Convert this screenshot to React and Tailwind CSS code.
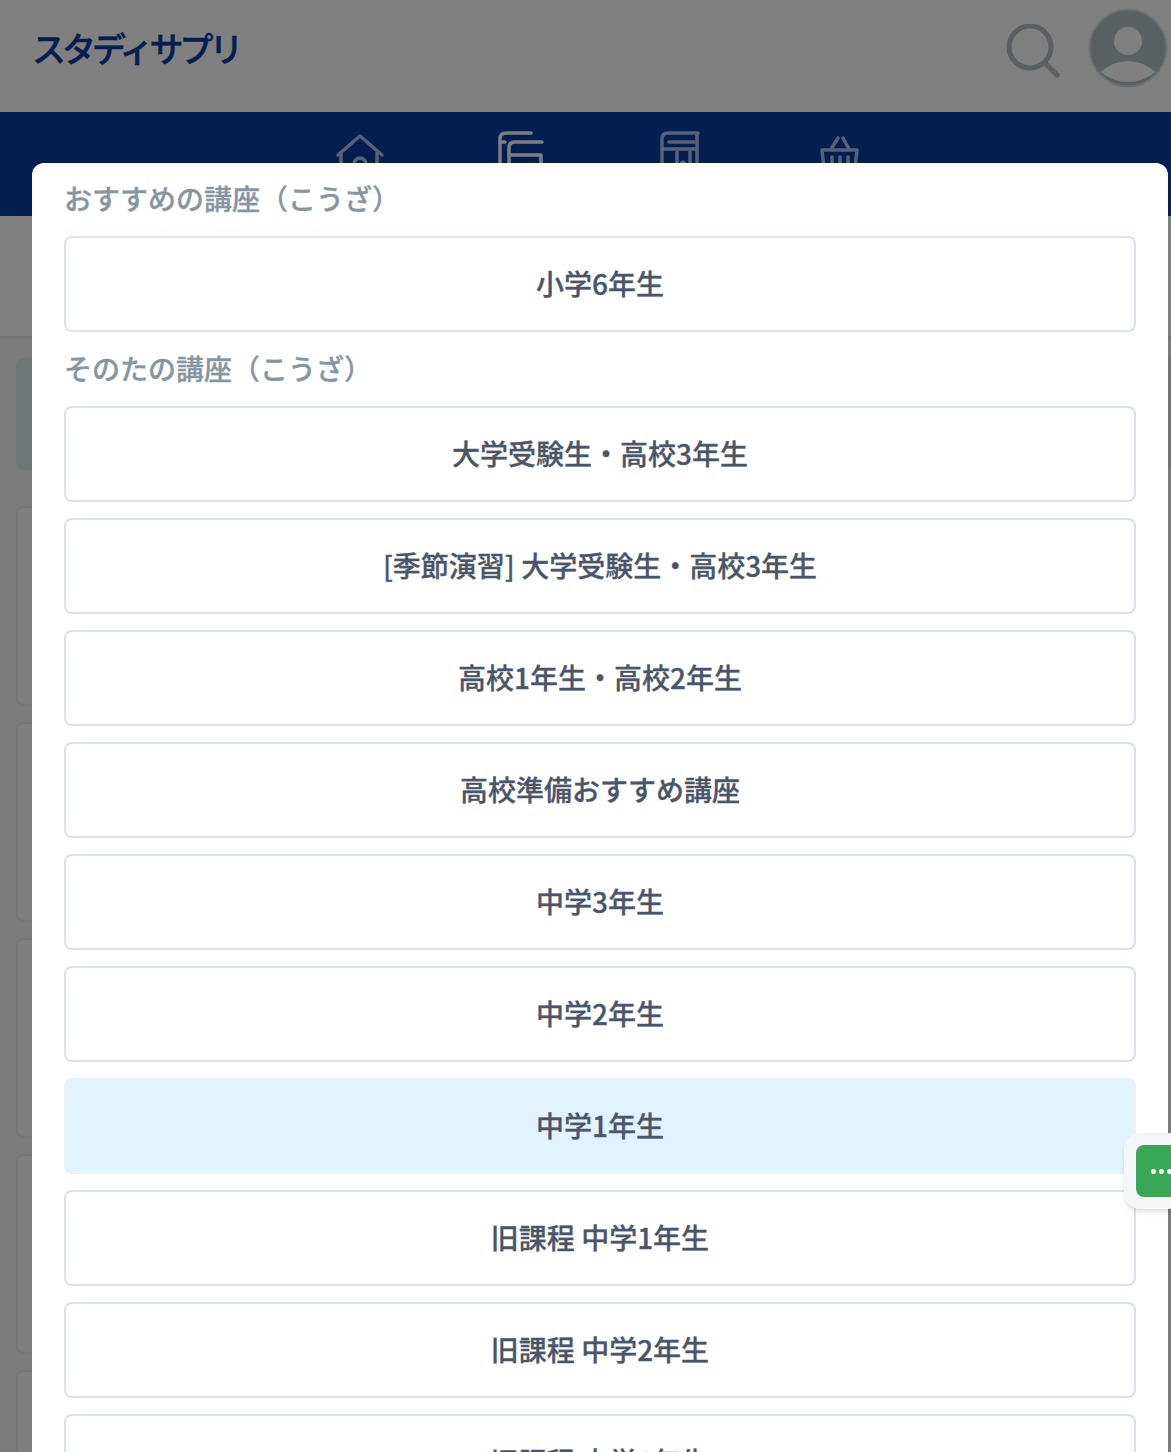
const font = { fontFamily: '"Noto Sans CJK JP", sans-serif' };

const otherCourses = [
    '大学受験生・高校3年生',
    '[季節演習] 大学受験生・高校3年生',
    '高校1年生・高校2年生',
    '高校準備おすすめ講座',
    '中学3年生',
    '中学2年生',
    '中学1年生',
    '旧課程 中学1年生',
    '旧課程 中学2年生',
    '旧課程 中学3年生',
];

const CourseButton = ({ label, active }) => (
    <div
        className={`mb-4 flex h-24 items-center justify-center rounded-lg border-2 pb-[2px] text-[28px] font-medium text-[#4a5568] [-webkit-text-stroke:0.3px] ${
            active ? 'border-[#ebf0f3] bg-[#e1f3ff]' : 'border-[#dae1e7] bg-white'
        }`}
    >
        {label}
    </div>
);

const Heading = ({ children }) => (
    <h2 className="mb-4 h-[42px] text-[28px] leading-[41px] font-medium text-[#8795a1] [-webkit-text-stroke:0.3px]">{children}</h2>
);

const NavIcons = () => (
    <div className="flex justify-center gap-[96px] pt-[18px] pl-[29px]">
        <svg width="64" height="64" viewBox="0 0 64 64" fill="none" stroke="#56617a" strokeWidth="3.5" strokeLinecap="round" strokeLinejoin="round">
            <path d="M10 25 32 6l22 19M13 23v34h36V23" />
            <path d="M26 57V34a6 6 0 0 1 12 0v23" />
        </svg>
        <svg width="64" height="64" viewBox="0 0 64 64" fill="none" stroke="#7c7f86" strokeWidth="3.5" strokeLinecap="round" strokeLinejoin="round">
            <path d="M43 3H18q-6 0-6 6v48M12 12h5" />
            <path d="M54 12H27q-6 0-6 6v39M21 25h32v32" />
        </svg>
        <svg width="64" height="64" viewBox="0 0 64 64" fill="none" stroke="#56617a" strokeWidth="3.5" strokeLinecap="round" strokeLinejoin="round">
            <path d="M50 3H20q-6 0-6 6v48M49 3v54M21 12h28M14 19h35" />
            <path d="M29 22v16l6-6 7 6V22" />
        </svg>
        <svg width="64" height="64" viewBox="0 0 64 64" fill="none" stroke="#56617a" strokeWidth="3.5" strokeLinecap="round" strokeLinejoin="round">
            <path d="M14 20h35l-4 37H18ZM23 19l7-11M41 19l-6-11" />
            <path d="M24 27v24M32 27v24M40 27v24" />
        </svg>
    </div>
);

export default function App() {
    return (
        <div className="relative h-[1452px] w-[1171px] overflow-hidden bg-[#7b7b7b]" style={font}>
            {/* page behind the modal */}
            <header className="flex h-28 items-start justify-between bg-[#808080] pt-2 pr-[3px] pl-[32px]">
                <span className="mt-[23px] text-[34px] leading-none font-medium tracking-[-4px] text-[#041e4f] [-webkit-text-stroke:0.5px]">スタディサプリ</span>
                <div className="flex items-start gap-[27px]">
                    <svg className="mt-4" width="56" height="56" viewBox="0 0 56 56" fill="none" stroke="#5a5f62" strokeWidth="5" strokeLinecap="round">
                        <circle cx="25" cy="23" r="21" />
                        <path d="M41 40 52 51" />
                    </svg>
                    <svg width="80" height="80" viewBox="0 0 80 80">
                        <circle cx="40" cy="40" r="38.5" fill="#5a5f62" stroke="#6c7275" strokeWidth="2" />
                        <circle cx="40" cy="33" r="14" fill="#808080" />
                        <path d="M12 64Q40 42 68 64Q40 84 12 64Z" fill="#808080" />
                    </svg>
                </div>
            </header>
            <nav className="h-[104px] bg-[#041e4f]">
                <NavIcons />
            </nav>
            <div className="h-[122px] border-b-2 border-[#747474] bg-[#808080]" />
            <div className="flex flex-col gap-[16px] px-4 pt-[20px]">
                <div className="-mr-4 h-[112px] rounded-l-lg bg-[#6f7676]" />
                <div className="mt-5 h-[200px] rounded-lg border-2 border-[#767676] bg-[#7f7f7f]" />
                <div className="h-[200px] rounded-lg border-2 border-[#767676] bg-[#7f7f7f]" />
                <div className="h-[200px] rounded-lg border-2 border-[#767676] bg-[#7f7f7f]" />
                <div className="h-[200px] rounded-lg border-2 border-[#767676] bg-[#7f7f7f]" />
                <div className="h-[200px] rounded-lg border-2 border-[#767676] bg-[#7f7f7f]" />
            </div>

            {/* course picker modal */}
            <div className="absolute top-[163px] left-8 h-[1289px] w-[1136px] overflow-hidden rounded-t-xl bg-white px-8 pt-[15px]">
                <Heading>おすすめの講座（こうざ）</Heading>
                <CourseButton label="小学6年生" />
                <Heading>そのたの講座（こうざ）</Heading>
                {otherCourses.map((label) => (
                    <CourseButton key={label} label={label} active={label === '中学1年生'} />
                ))}
            </div>

            {/* chat launcher */}
            <div className="absolute top-[1133px] left-[1124px] h-[76px] w-[60px] rounded-2xl bg-[#f5f6f7] shadow-md">
                <div className="mt-3 ml-3 flex h-[52px] w-[60px] items-center gap-[3px] rounded-lg bg-[#3aa757] pl-[15px]">
                    <span className="size-[5px] rounded-full bg-white" />
                    <span className="size-[5px] rounded-full bg-white" />
                    <span className="size-[5px] rounded-full bg-white" />
                </div>
            </div>
        </div>
    );
}
